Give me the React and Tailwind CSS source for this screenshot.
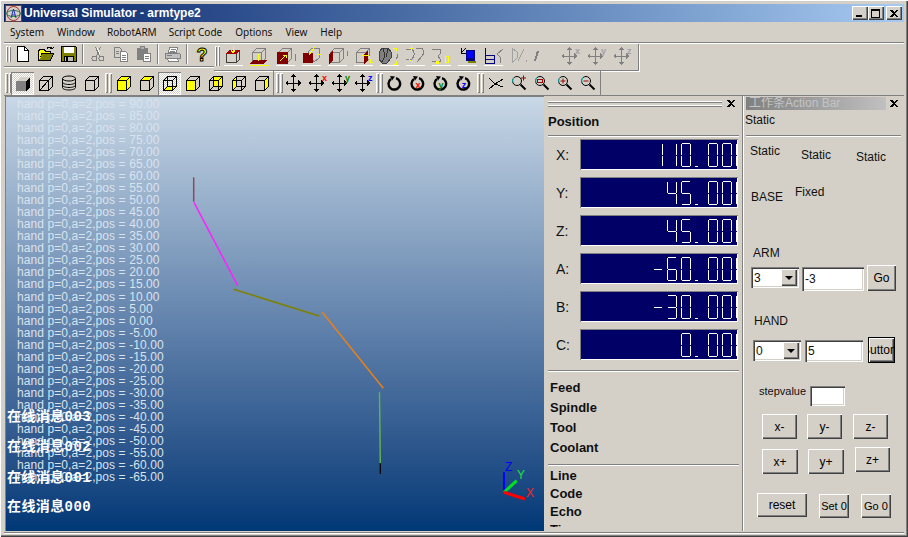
import React from 'react';

const raised = 'shadow-[inset_1px_1px_0_#ffffff,inset_-1px_-1px_0_#404040,inset_-2px_-2px_0_#808080]';
const sunken = 'shadow-[inset_1px_1px_0_#808080,inset_2px_2px_0_#404040,inset_-1px_-1px_0_#ffffff,inset_-2px_-2px_0_#d4d0c8]';
const thinSunken = 'shadow-[inset_1px_1px_0_#808080,inset_-1px_-1px_0_#ffffff]';

const posLines = [90, 85, 80, 75, 70, 65, 60, 55, 50, 45, 40, 35, 30, 25, 20, 15, 10, 5, 0, -5, -10, -15, -20, -25, -30, -35, -40, -45, -50, -55, -60, -65];

const SEGS = {
  '0': 'abcdef', '1': 'bc', '2': 'abged', '3': 'abgcd', '4': 'fgbc', '5': 'afgcd', '6': 'afgedc', '-': 'g',
};
const SEG_ORDER = ['', 'a', '', 'f', '', 'b', '', 'g', '', 'e', '', 'c', '', 'd', ''];

function Digit({ ch }) {
  if (ch === '.') {
    return (
      <div className="w-[9px] h-[24px] flex items-end">
        <div className="w-[3px] h-px bg-white" />
      </div>
    );
  }
  const on = SEGS[ch];
  return (
    <div className="w-[10px] h-[24px] shrink-0 grid grid-cols-[1px_8px_1px] grid-rows-[1px_11px_1px_10px_1px]">
      {SEG_ORDER.map((s, i) => (
        <span key={i} className={s && on.includes(s) ? 'bg-white' : ''} />
      ))}
    </div>
  );
}

function Lcd({ label, value }) {
  return (
    <div className="flex h-[31px] items-center">
      <div className="w-[32px] pl-[8px] pt-px text-[14px] text-[#101010] font-['Liberation_Sans',sans-serif]">{label}</div>
      <div className={`w-[158px] h-[31px] bg-[#000066] overflow-hidden flex items-center justify-end ${thinSunken}`}>
        <span className="sr-only">{value}</span>
        <div className="flex gap-[4px] -mr-[8px] shrink-0" aria-hidden="true">
          {(value + '0').split('').map((c, i) => <Digit key={i} ch={c} />)}
        </div>
      </div>
    </div>
  );
}

function Etched({ className = '' }) {
  return <div className={`h-[2px] border-t border-t-[#808080] border-b border-b-white ${className}`} />;
}

function Btn({ children, className = '', focused, textClass = '' }) {
  return (
    <button className={`shrink-0 flex items-center justify-center overflow-hidden bg-[#d4d0c8] text-black font-['Liberation_Sans',sans-serif] ${focused ? 'border border-black' : ''} ${raised} ${className}`}>
      <span className={`shrink-0 whitespace-nowrap ${textClass}`}>{children}</span>
    </button>
  );
}

function Combo({ value, className = '' }) {
  return (
    <div className={`shrink-0 h-[21px] flex items-center bg-white p-[2px] text-[12px] ${sunken} ${className}`}>
      <span className="flex-1 pl-px">{value}</span>
      <div className={`w-[16px] h-[17px] bg-[#d4d0c8] flex items-center justify-center ${raised}`}>
        <div className="w-0 h-0 border-l-[4px] border-r-[4px] border-t-[4px] border-l-transparent border-r-transparent border-t-black" />
      </div>
    </div>
  );
}

function Edit({ value, className = '' }) {
  return (
    <div className={`shrink-0 flex items-center bg-white pl-[3px] text-[12px] ${sunken} ${className}`}>{value}</div>
  );
}

function CloseX({ className = '' }) {
  return (
    <svg width="8" height="7" viewBox="0 0 8 7" className={className} shapeRendering="crispEdges">
      <path d="M0 0h2l2 2 2-2h2L5 3.5 8 7H6L4 5 2 7H0l3-3.5z" fill="#000" />
    </svg>
  );
}

function Grip({ className = '' }) {
  return (
    <div className={`flex h-full gap-px py-[2px] ${className}`}>
      <div className="w-[3px] h-full border-l border-t border-white bg-[#d4d0c8] shadow-[inset_-1px_-1px_0_#808080]" />
      <div className="w-[3px] h-full border-l border-t border-white bg-[#d4d0c8] shadow-[inset_-1px_-1px_0_#808080]" />
    </div>
  );
}

function Sep({ w = 'w-[6px]' }) {
  return (
    <div className={`${w} h-[20px] flex justify-center`}>
      <div className="w-[2px] h-full border-l border-l-[#808080] border-r border-r-white" />
    </div>
  );
}

function Tool({ children, checked, w = 'w-[23px]' }) {
  return (
    <div className={`${w} h-[23px] shrink-0 flex items-center justify-center ${checked ? `bg-[repeating-conic-gradient(#ffffff_0_25%,#d4d0c8_0_50%)] bg-[length:2px_2px] ${thinSunken}` : ''}`}>
      {children}
    </div>
  );
}

/* ---------- toolbar icons ---------- */
function Ico({ children, w = 16, h = 16 }) {
  return <svg width={w} height={h} viewBox={`0 0 ${w} ${h}`} fill="none" shapeRendering="crispEdges">{children}</svg>;
}
const NewIco = () => <Ico><path d="M2.5.5h7l4 4v11h-11z" fill="#fff" stroke="#000" /><path d="M9.5.5v4h4" stroke="#000" /></Ico>;
const OpenIco = () => (
  <Ico>
    <path d="M.5 14.5v-10l2-1h4l1 2h5v2" fill="#ffff00" stroke="#000" />
    <path d="M.5 14.5l3-7h12l-3 7z" fill="#808000" stroke="#000" />
    <path d="M1 13V6h1v1h1v1H2v1h1v1H2v1h1z" fill="#ffff00" />
    <path d="M9 2.5c2-2 4-2 5 .5m0 0l1.5-1.5m-1.5 1.5L12 2" stroke="#000" />
  </Ico>
);
const SaveIco = () => (
  <Ico>
    <path d="M.5.5h14l1 1v14H.5z" fill="#808000" stroke="#000" />
    <rect x="3" y="1" width="10" height="6" fill="#fff" />
    <path d="M3.5 10.5h9v5h-9z" fill="#c0c0c0" stroke="#000" />
    <rect x="5" y="11" width="2" height="4" fill="#000" />
  </Ico>
);
const CutIco = () => (
  <Ico>
    <path d="M5.5 1l4 9M10.5 1l-4 9" stroke="#808080" />
    <circle cx="4.5" cy="12.5" r="2.5" stroke="#808080" />
    <circle cx="11.5" cy="12.5" r="2.5" stroke="#808080" />
    <path d="M7 2l3 6" stroke="#fff" />
  </Ico>
);
const CopyIco = () => (
  <Ico>
    <path d="M1.5 1.5h5l2 2v8h-7z" fill="#d4d0c8" stroke="#808080" />
    <path d="M7.5 5.5h5l2 2v8h-7z" fill="#fff" stroke="#808080" />
    <path d="M9 9h4M9 11h4M9 13h4M3 5h3M3 7h3" stroke="#808080" />
  </Ico>
);
const PasteIco = () => (
  <Ico>
    <path d="M1 2h11v12H1z" fill="#808080" />
    <path d="M4.5.5h4v3h-4z" fill="#b0b0b0" stroke="#808080" />
    <path d="M7.5 7.5h7v8h-7z" fill="#fff" stroke="#808080" />
    <path d="M9 10h4M9 12h4" stroke="#808080" />
  </Ico>
);
const PrintIco = () => (
  <Ico>
    <path d="M4.5 1.5h8l-1 5h-8z" fill="#fff" stroke="#808080" />
    <path d="M.5 7.5h14l1 1v4h-15z" fill="#c0c0c0" stroke="#808080" />
    <path d="M2.5 12.5h10l1 3h-10z" fill="#fff" stroke="#808080" />
    <path d="M2 9h5M6 3h5M5 5h5" stroke="#808080" />
  </Ico>
);
const HelpIco = () => (
  <svg width="16" height="18" viewBox="0 0 16 18">
    <text x="8" y="15.5" textAnchor="middle" fontSize="18" fontWeight="700" fontFamily="'Liberation Sans',sans-serif" fill="#ffff00" stroke="#000" strokeWidth="1">?</text>
  </svg>
);

/* cube faces for the second toolbar row */
const F = {
  front: 'M1.5 5.5h9v10h-9z',
  back: 'M5.5 1.5h9v10h-9z',
  top: 'M1.5 5.5l4-4h9l-4 4z',
  right: 'M10.5 5.5l4-4v10l-4 4z',
  left: 'M1.5 5.5l4-4v10l-4 4z',
  bottom: 'M1.5 15.5l4-4h9l-4 4z',
};
function Cube({ fill = [], hidden, stroke = '#000' }) {
  return (
    <Ico>
      {fill.map((k) => <path key={k} d={F[k]} fill="#ffff00" />)}
      {hidden && <path d="M5.5 1.5v10h9M5.5 11.5l-4 4" stroke={stroke} />}
      <path d="M1.5 5.5h9v10h-9zM1.5 5.5l4-4h9v10l-4 4M10.5 5.5l4-4" stroke={stroke} />
    </Ico>
  );
}
const ShadedCube = () => (
  <Ico>
    <path d="M1 6h10v10H1z" fill="#808080" />
    <path d="M1 6l4-4h10l-4 4z" fill="#d4d0c8" />
    <path d="M11 6l4-4v10l-4 4z" fill="#000" />
  </Ico>
);
const DiagCube = () => (
  <Ico>
    <path d="M1.5 5.5h9v10h-9zM1.5 5.5l4-4h9v10l-4 4M10.5 5.5l4-4M1.5 15.5l9-10" stroke="#000" />
  </Ico>
);
const StackIco = () => (
  <svg width="16" height="16" viewBox="0 0 16 16" fill="none" stroke="#000">
    <ellipse cx="8" cy="3.5" rx="6.5" ry="2.5" />
    <path d="M1.5 3.5v9c0 1.5 3 2.5 6.5 2.5s6.5-1 6.5-2.5v-9" />
    <path d="M1.5 7c0 1.5 3 2.5 6.5 2.5s6.5-1 6.5-2.5M1.5 10c0 1.5 3 2.5 6.5 2.5s6.5-1 6.5-2.5" />
  </svg>
);

function MoveIco({ letter, color = '#000', off }) {
  const c = off ? '#808080' : '#000';
  return (
    <svg width="20" height="18" viewBox="0 0 20 18" fill="none" shapeRendering="crispEdges">
      <path d="M8 3v12M2 9h12" stroke={c} strokeWidth="1" />
      <path d="M8 0l3 3H5zM8 18l-3-3h6zM0 9l3-3v6zM16 9l-3 3V6z" fill={c} />
      {letter && <text x="14" y="7" fontSize="9" fontWeight="700" fontFamily="'Liberation Sans',sans-serif" fill={off ? '#a0a0a0' : color} textAnchor="start">{letter}</text>}
    </svg>
  );
}
function RotIco({ letter, color }) {
  return (
    <svg width="16" height="16" viewBox="0 0 16 16" fill="none">
      <path d="M9 3.2A5.8 5.8 0 1 1 4 4" stroke="#000" strokeWidth="2.4" />
      <path d="M3 1l5 .5-3 4z" fill="#000" />
      {letter && <text x="8" y="12.5" fontSize="9" fontWeight="700" textAnchor="middle" fontFamily="'Liberation Sans',sans-serif" fill={color}>{letter}</text>}
    </svg>
  );
}
function ZoomIco({ children }) {
  return (
    <svg width="16" height="16" viewBox="0 0 16 16" fill="none">
      <circle cx="6" cy="6" r="4.5" stroke="#000" />
      <path d="M3 2.5a4.5 4.5 0 0 0-1 5" stroke="#00c0c0" />
      <path d="M9.5 9.5l5 5" stroke="#000" strokeWidth="2" />
      {children}
    </svg>
  );
}

/* first-row view icons */
function V({ children, line = '#fff' }) {
  return (
    <svg width="22" height="20" viewBox="0 0 22 20" fill="none" shapeRendering="crispEdges">
      {children}
      <path d="M2 19.5h19" stroke={line} />
    </svg>
  );
}
const boxGray = 'M4.5 6.5h9v10h-9zM4.5 6.5l4-4h9v10l-4 4M13.5 6.5l4-4';
const boxBlack = 'M4.5 7.5h10v9h-10zM4.5 7.5l3-3h10v9l-3 3M14.5 7.5l3-3';
const Y = '#ffff00';
const R = '#800000';
const viewIcons = [
  <V key="1"><path d={boxBlack} stroke="#404040" /><path d="M4 8l3-4h11l-3 4z" fill="#a00000" /><path d="M11 0v6M9 4l2 3 2-3" stroke={Y} /></V>,
  <V key="2" line={Y}><path d={boxGray} stroke="#808080" /><path d="M1 18l4-4h14l-4 4z" fill={R} /><path d="M10 8v7" stroke={Y} /></V>,
  <V key="3"><path d={boxGray} stroke="#808080" /><path d="M3 6h11v12H3z" fill={R} /><path d="M6 15l6-6M9 9h3v3" stroke={Y} /><path d="M21.5 8v7" stroke="#808080" /></V>,
  <V key="4"><path d="M8 6l4-4h7v10l-5 4z" stroke="#808080" /><path d="M3 7h10v10H3z" fill={R} /><path d="M9 9l6-8M17 8h4" stroke={Y} /></V>,
  <V key="5"><path d={boxGray} stroke="#808080" /><path d="M3 8l4-4v10l-4 4z" fill={R} /><path d="M21 5v5" stroke="#808080" /></V>,
  <V key="6"><path d={boxGray} stroke="#808080" /><path d="M12 8l4-4v10l-4 4z" fill={R} /><path d="M10 9h5c2 0 3 2 3 4v3h3" stroke={Y} /></V>,
  <V key="7"><path d="M1 7l3-5h6l3 4v6l-4 5H4l-3-4z" fill="#808080" stroke="#404040" /><path d="M5 2l2 8-3 6M10 3l-2 8" stroke="#303030" /><path d="M15 2h3v3M18 15v3h-3" stroke={Y} /><path d="M19 8c1 2 0 4-1 5" stroke="#808080" /></V>,
  <V key="8"><path d="M2 3h6c3 3 3 7 0 10H2M12 2h6c2 3 2 6 0 8l-5 6" stroke="#808080" /><path d="M7 0v5M5 2h4M5 13l3 3" stroke={Y} /></V>,
  <V key="9"><path d="M2 3h8v5l-2 2 2 3v2H2" stroke="#808080" /><rect x="6" y="15" width="3" height="3" fill={Y} /><path d="M15 10h3v6h-3z" stroke={Y} /></V>,
  <V key="10"><path d="M5 2v5h5M5 7l5-5" stroke="#000" /><rect x="10" y="4" width="9" height="11" fill="#000080" /><rect x="11" y="5" width="6" height="7" fill="#0000ff" /><rect x="12" y="15" width="8" height="2" fill="#808000" /></V>,
  <V key="11"><path d="M3 2v15h9V9H3M3 13h9" stroke="#000080" /><path d="M21 3l-6 5 3 3v6" stroke="#808080" /></V>,
  <V key="12" line="#d4d0c8"><path d="M4 2l5 4v6l-5 5zM16 3l-6 12M18 14v2" stroke="#a0a0a0" /></V>,
  <V key="13" line="#d4d0c8"><path d="M4 5L1 15" stroke="#808080" strokeWidth="2" /></V>,
];

function Viewport() {
  return (
    <div className="relative w-[539px] h-[435px] overflow-hidden bg-gradient-to-b from-[#c9d8e6] to-[#003876] shadow-[inset_1px_1px_0_#808080] font-['Liberation_Sans',sans-serif]">
      <div className="pl-[12px] pt-[2px] text-[12px] leading-[12.03px] tracking-[0.09px] text-[#d9e3ee]">
        {posLines.map((p) => (
          <div key={p} className="whitespace-nowrap">hand p=0,a=2,pos = {p.toFixed(2)}</div>
        ))}
      </div>

      {/* robot arm and axis triad on the GL canvas */}
      <svg className="absolute inset-0" width="539" height="435" viewBox="5 96 539 435" fill="none">
        <path d="M193.7 177.3V201.7" stroke="#8a4a5a" strokeWidth="1.5" />
        <path d="M194 202.3L237.7 285.7" stroke="#ff20ff" strokeWidth="1.5" />
        <path d="M233.7 289.3L319 316" stroke="#808000" strokeWidth="1.5" />
        <path d="M322.3 312.3L383.3 388.3" stroke="#e8801a" strokeWidth="1.5" />
        <path d="M379.5 392.3L380.3 463.3" stroke="#5fb050" strokeWidth="1.5" />
        <path d="M380.3 463.3V474" stroke="#000" strokeWidth="1.2" />
        <path d="M504 492.3V472.3" stroke="#0000ff" strokeWidth="2" />
        <path d="M504 492.3L516.7 480.7" stroke="#00e020" strokeWidth="3" />
        <path d="M504 492.3L525 499" stroke="#ff0000" strokeWidth="3" />
        <text x="505" y="471" fontSize="12" fill="#0000ff" fontFamily="'Liberation Sans',sans-serif">Z</text>
        <text x="517" y="479" fontSize="12" fill="#20e040" fontFamily="'Liberation Sans',sans-serif">Y</text>
        <text x="526" y="497" fontSize="12" fill="#ff2020" fontFamily="'Liberation Sans',sans-serif">X</text>
      </svg>

      {[['003', 'top-[313px]'], ['002', 'top-[343px]'], ['001', 'top-[374px]'], ['000', 'top-[403px]']].map(([n, top]) => (
        <div key={n} className={`absolute left-[2px] ${top} text-[14px] leading-[16px] font-bold tracking-[0.4px] text-white whitespace-nowrap font-['Liberation_Mono','Noto_Sans_CJK_SC',monospace]`}>在线消息{n}</div>
      ))}
    </div>
  );
}

function PositionPanel() {
  const rows = [['X:', '110.00'], ['Y:', '45.00'], ['Z:', '45.00'], ['A:', '-60.00'], ['B:', '-30.00'], ['C:', '0.00']];
  return (
    <div className="w-[198px] h-[435px] pl-[4px] pr-[3px] shrink-0 overflow-hidden font-['Liberation_Sans',sans-serif] text-[#101010]">
      <div className="h-[14px] flex items-center">
        <div className="w-[174px] h-[6px] mt-px border-t border-t-white border-b border-b-[#808080] bg-[#d4d0c8] shadow-[inset_0_1px_0_#808080,inset_0_-1px_0_#fff]" />
        <CloseX className="ml-[5px]" />
      </div>
      <div className="mt-[4px] text-[13px] leading-[16px] font-bold">Position</div>
      <Etched className="mt-[5px]" />
      <div className="mt-[2px] flex flex-col gap-[7px]">
        {rows.map(([l, v]) => <Lcd key={l} label={l} value={v} />)}
      </div>
      <Etched className="mt-[10px]" />
      <div className="mt-[6px] pl-[2px] text-[13px] leading-[20px] font-bold">
        <div>Feed</div>
        <div>Spindle</div>
        <div>Tool</div>
        <div>Coolant</div>
      </div>
      <Etched className="mt-[6px]" />
      <div className="h-[61px] overflow-hidden pt-px pl-[2px] text-[13px] leading-[18px] font-bold">
        <div>Line</div>
        <div>Code</div>
        <div>Echo</div>
        <div>Time</div>
      </div>
    </div>
  );
}

function ActionPanel() {
  return (
    <div className="flex-1 h-[435px] border-l border-l-[#808080] shadow-[inset_1px_0_0_#fff] text-[12px] leading-[14px] text-[#101010] font-['Liberation_Sans',sans-serif]">
      <div className="h-[14px] pt-px flex items-center">
        <div className="ml-[3px] w-[140px] h-[13px] bg-gradient-to-r from-[#808080] to-[#c0c0c0] text-[#c4c4c4] text-[12px] leading-[13px] pl-[3px] whitespace-nowrap font-['Liberation_Sans','Noto_Sans_CJK_SC',sans-serif]">工作条Action Bar</div>
        <CloseX className="ml-[4px]" />
      </div>
      <div className="mt-[3px] ml-[2px]">Static</div>
      <Etched className="mt-[8px] ml-[3px] mr-[3px]" />

      <div className="mt-[7px] flex items-start">
        <div className="ml-[7px] w-[51px]">Static</div>
        <div className="w-[55px] mt-[4px]">Static</div>
        <div className="mt-[6px]">Static</div>
      </div>
      <div className="mt-[21px] flex items-start">
        <div className="ml-[8px] w-[44px] mt-[5px]">BASE</div>
        <div>Fixed</div>
      </div>

      <div className="mt-[42px] ml-[10px]">ARM</div>
      <div className="mt-[5px] flex items-start">
        <Combo value="3" className="ml-[8px] w-[48px] mt-[2px]" />
        <Edit value="-3" className="ml-[3px] w-[62px] h-[24px] mt-[2px]" />
        <Btn className="ml-[3px] w-[29px] h-[26px] text-[12px]">Go</Btn>
      </div>

      <div className="mt-[23px] ml-[11px]">HAND</div>
      <div className="mt-[9px] flex items-start">
        <Combo value="0" className="ml-[10px] w-[48px] mt-[3px]" />
        <Edit value="5" className="ml-[4px] w-[58px] h-[22px] mt-[3px]" />
        <Btn focused textClass="-ml-[7px]" className="ml-[5px] w-[27px] h-[26px] text-[12px] !justify-start">Button</Btn>
      </div>

      <div className="mt-[21px] flex items-start">
        <div className="ml-[16px] w-[51px] text-[11px]">stepvalue</div>
        <Edit value="" className="w-[35px] h-[20px] mt-[2px]" />
      </div>

      <div className="mt-[8px] flex items-start">
        <Btn className="ml-[19px] w-[35px] h-[25px] text-[12px]">x-</Btn>
        <Btn className="ml-[10px] w-[35px] h-[25px] text-[12px]">y-</Btn>
        <Btn className="ml-[11px] w-[35px] h-[25px] text-[12px]">z-</Btn>
      </div>
      <div className="mt-[8px] flex items-start">
        <Btn className="ml-[19px] w-[36px] h-[25px] mt-[2px] text-[12px]">x+</Btn>
        <Btn className="ml-[10px] w-[36px] h-[25px] mt-[2px] text-[12px]">y+</Btn>
        <Btn className="ml-[11px] w-[35px] h-[25px] text-[12px]">z+</Btn>
      </div>
      <div className="mt-[19px] flex items-start">
        <Btn className="ml-[14px] w-[50px] h-[24px] text-[12px]">reset</Btn>
        <Btn className="ml-[12px] w-[30px] h-[24px] mt-px text-[11px]">Set 0</Btn>
        <Btn className="ml-[12px] w-[30px] h-[24px] mt-px text-[11px]">Go 0</Btn>
      </div>
    </div>
  );
}

export default function App() {
  return (
    <div className="w-[908px] h-[537px] overflow-hidden bg-[#d4d0c8] p-[4px] shadow-[inset_1px_1px_0_#ffffff,inset_-1px_-1px_0_#404040,inset_-2px_-2px_0_#808080] text-black">
      {/* title bar */}
      <div className="h-[18px] flex items-center bg-gradient-to-r from-[#0a246a] to-[#a6caf0]">
        <svg width="17" height="17" viewBox="0 0 17 17" fill="none" className="ml-[1px]">
          <rect x="0.5" y="0.5" width="16" height="16" fill="#d8cfc8" stroke="#604040" />
          <ellipse cx="8.5" cy="8.5" rx="6.5" ry="7" stroke="#a03030" />
          <ellipse cx="8.5" cy="8.5" rx="7" ry="3" stroke="#208040" />
          <path d="M6 13l2.5-9L11 13M7 10h3" stroke="#2030c0" />
        </svg>
        <span className="ml-[2px] text-[12px] font-bold text-white whitespace-nowrap font-['Liberation_Sans',sans-serif]">Universal Simulator - armtype2</span>
        <div className="ml-auto mr-[2px] flex items-center">
          <div className={`w-[16px] h-[14px] bg-[#d4d0c8] flex items-end justify-center pb-[3px] ${raised}`}>
            <div className="w-[6px] h-[2px] bg-black mr-[2px]" />
          </div>
          <div className={`w-[16px] h-[14px] bg-[#d4d0c8] flex items-center justify-center ${raised}`}>
            <div className="w-[9px] h-[9px] border border-black border-t-2 mr-px" />
          </div>
          <div className={`ml-[2px] w-[16px] h-[14px] bg-[#d4d0c8] flex items-center justify-center ${raised}`}>
            <CloseX className="mr-px" />
          </div>
        </div>
      </div>

      {/* menu */}
      <div className="h-[20px] flex items-center text-[10px] text-[#101010] font-['Noto_Sans',sans-serif]">
        <span className="ml-[6px]">System</span>
        <span className="ml-[13px]">Window</span>
        <span className="ml-[12px]">RobotARM</span>
        <span className="ml-[12px]">Script Code</span>
        <span className="ml-[13px]">Options</span>
        <span className="ml-[13px]">View</span>
        <span className="ml-[13px]">Help</span>
      </div>
      <Etched />

      {/* toolbar row 1 */}
      <div className="h-[27px] flex">
        <div className="flex items-start">
          <div className="flex items-center h-[23px] pb-[2px] border-b border-b-[#808080] shadow-[0_1px_0_#fff]">
            <Grip className="ml-[2px] w-[5px]" />
            <Tool><NewIco /></Tool>
            <Tool><OpenIco /></Tool>
            <Tool><SaveIco /></Tool>
            <Sep />
            <Tool><CutIco /></Tool>
            <Tool><CopyIco /></Tool>
            <Tool><PasteIco /></Tool>
            <Sep />
            <Tool><PrintIco /></Tool>
            <Sep />
            <Tool><HelpIco /></Tool>
            <div className="w-[1px]" />
          </div>
        </div>
        <div className="flex items-center h-[27px] pb-[2px] w-[425px] border-b border-b-[#808080] border-r border-r-[#808080] shadow-[1px_1px_0_#fff]">
          <Grip className="w-[6px] pl-px" />
          <div className="flex items-center">
            {viewIcons.map((ic, i) => <Tool key={i} w="w-[26px]">{ic}</Tool>)}
            <Tool w="w-[26px]"><MoveIco off letter="x" /></Tool>
            <Tool w="w-[26px]"><MoveIco off letter="y" /></Tool>
            <Tool w="w-[26px]"><MoveIco off letter="z" /></Tool>
          </div>
        </div>
      </div>

      {/* toolbar row 2 */}
      <div className="h-[25px] flex items-center border-b border-b-[#808080]">
        <div className="flex items-center h-full">
          <Grip className="ml-[1px] w-[6px]" />
          <Tool checked><ShadedCube /></Tool>
          <Tool><DiagCube /></Tool>
          <Tool><StackIco /></Tool>
          <Tool><Cube /></Tool>
        </div>
        <div className="flex items-center h-full">
          <Grip className="w-[9px] pl-[2px]" />
          <Tool><Cube fill={['front', 'top', 'right']} /></Tool>
          <Tool><Cube fill={['top']} /></Tool>
          <Tool checked><Cube fill={['bottom']} hidden /></Tool>
          <Tool><Cube fill={['front']} /></Tool>
          <Tool><Cube fill={['back']} hidden /></Tool>
          <Tool><Cube fill={['left']} hidden /></Tool>
          <Tool><Cube fill={['right']} /></Tool>
        </div>
        <div className="flex items-center h-full">
          <Grip className="w-[10px] pl-[2px] border-l border-l-[#808080]" />
          <Tool><MoveIco /></Tool>
          <Tool><MoveIco letter="x" color="#ff0000" /></Tool>
          <Tool><MoveIco letter="y" color="#008000" /></Tool>
          <Tool><MoveIco letter="z" color="#0000ff" /></Tool>
        </div>
        <div className="flex items-center h-full">
          <Grip className="w-[8px] pl-px" />
          <Tool><RotIco /></Tool>
          <Tool><RotIco letter="x" color="#ff0000" /></Tool>
          <Tool><RotIco letter="y" color="#008000" /></Tool>
          <Tool><RotIco letter="z" color="#0000ff" /></Tool>
        </div>
        <div className="flex items-center h-full">
          <Grip className="w-[9px] pl-[2px]" />
          <Tool>
            <Ico><path d="M1 3l6 6-6 5M15 4L7 9l8 3" stroke="#000" /></Ico>
          </Tool>
          <Tool>
            <ZoomIco><path d="M10 3h5M12.5 0.5v5" stroke="#a00000" /></ZoomIco>
          </Tool>
          <Tool>
            <ZoomIco><rect x="3.5" y="4.5" width="5" height="3" stroke="#a00000" /></ZoomIco>
          </Tool>
          <Tool>
            <ZoomIco><path d="M3.5 6h5M6 3.5v5" stroke="#a00000" /></ZoomIco>
          </Tool>
          <Tool>
            <ZoomIco><path d="M3.5 6h5" stroke="#a00000" /></ZoomIco>
          </Tool>
          <div className="w-[1px] h-full ml-[1px] bg-[#808080]" />
        </div>
      </div>

      {/* main area */}
      <div className="flex h-[435px] ml-px">
        <Viewport />
        <PositionPanel />
        <ActionPanel />
      </div>
      <Etched className="mt-[1px]" />
    </div>
  );
}
